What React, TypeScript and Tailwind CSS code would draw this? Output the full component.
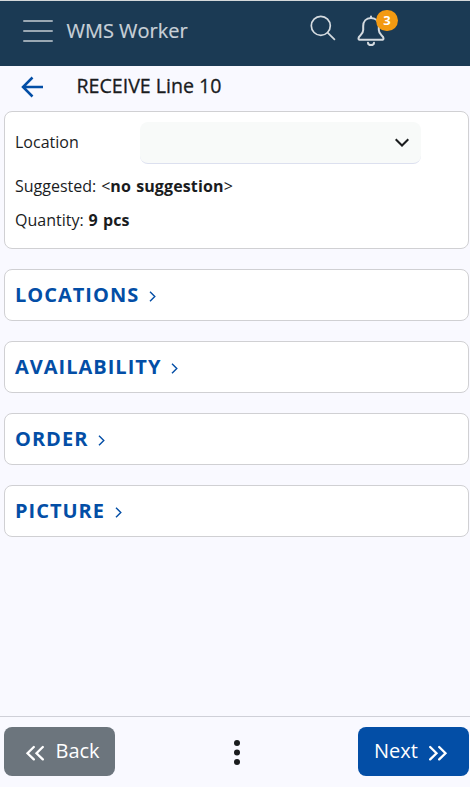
import React from "react";

function Section({ title }: { title: string }) {
  return (
    <section className="flex h-[52px] items-center rounded-lg border border-[#d0d0d3] bg-white px-2.5">
      <h2 className="text-[20px] leading-[26px] font-bold tracking-[1px] text-[#034ea6]">{title}</h2>
      <svg className="mt-[3px] ml-[9.500px] h-[11px] w-[7px]" viewBox="0 0 7 11" fill="none" stroke="#034ea6" strokeWidth="1.4">
        <path d="M1 .7 5.8 5.5 1 10.3" />
      </svg>
    </section>
  );
}

export default function App() {
  return (
    <div className="flex h-[787px] w-[470px] flex-col overflow-hidden bg-[#f9f9ff] font-['Open_Sans',sans-serif] text-[#1a1c1e]">
      <header className="flex h-[66px] shrink-0 border-t border-[#d5d8da] bg-[#1b3a54] pl-[23px] text-[#c9d1d8]">
        <svg className="mt-[18px] h-6 w-[30px]" viewBox="0 0 30 24" fill="none" stroke="#9aa8b3" strokeWidth="2" strokeLinecap="round">
          <path d="M1 2h28M1 12h28M1 22h28" />
        </svg>
        <div className="mt-[16px] ml-[13.500px] w-[243.500px] text-[20px] leading-[28px] font-medium whitespace-nowrap [-webkit-text-stroke:0.2px]">WMS Worker</div>
        <svg className="mt-[14px] h-[26px] w-[26px]" viewBox="0 0 26 26" fill="none" stroke="#d5dbe0" strokeWidth="1.7">
          <circle cx="10.8" cy="10.8" r="9.5" />
          <path d="m17.6 17.6 7.3 7.3" />
        </svg>
        <div className="relative mt-[14px] ml-[21px] h-8 w-7">
          <svg className="h-8 w-7" viewBox="0 0 28 32" fill="none" stroke="#d5dbe0" strokeWidth="2" strokeLinejoin="round" strokeLinecap="round">
            <path d="M14 1.500V3M14 3C9 3 6.200 6.500 6.200 11v4C6.200 20 1.500 20.500 1.500 23.200c0 1.100.7 1.600 1.700 1.600h21.600c1 0 1.700-.5 1.700-1.600 0-2.700-4.700-3.200-4.700-8.200v-4C21.800 6.500 19 3 14 3Z" />
            <path d="M11 27.800c.3 3 5.700 3 6 0" />
          </svg>
          <span className="absolute -top-[5px] left-[19px] flex h-[21px] w-[22px] items-center justify-center rounded-full bg-[#f39a12] text-[13px] leading-none font-bold text-white">3</span>
        </div>
      </header>

      <div className="flex h-[45px] shrink-0 items-center pl-[21px]">
        <svg className="-mt-[3px] h-[22px] w-[22px]" viewBox="0 0 22 22" fill="none" stroke="#034ea6" strokeWidth="2.500">
          <path d="M11.500 1.500 2 11l9.500 9.500M2 11h20" />
        </svg>
        <h1 className="-mt-[5px] ml-[33.500px] text-[19.600px] leading-6 font-medium [-webkit-text-stroke:0.3px]">RECEIVE Line 10</h1>
      </div>

      <main className="flex grow flex-col gap-5 pr-px pl-1">
        <section className="h-[138px] rounded-lg border border-[#d0d0d3] bg-white px-2.5 pt-2.5 text-[16px] leading-[22px]">
          <div className="flex h-[42px] items-center">
            <label className="-mt-0.5 w-[125px]">Location</label>
            <button aria-label="Location" className="flex h-[42px] w-[281px] items-center justify-end rounded-lg border-b border-[#dce0ef] bg-[#f8faf9] pr-3">
              <svg className="h-[9px] w-3.5" viewBox="0 0 14 9" fill="none" stroke="#1a1c1e" strokeWidth="2">
                <path d="m.700 1.200 6.300 6.300 6.300-6.300" />
              </svg>
            </button>
          </div>
          <p className="mt-[11px] [word-spacing:0.8px]">Suggested: &lt;<b className="tracking-[0.13px]">no suggestion</b>&gt;</p>
          <p className="mt-3 [word-spacing:0.8px]">Quantity: <b className="tracking-[0.13px]">9 pcs</b></p>
        </section>
        <Section title="LOCATIONS" />
        <Section title="AVAILABILITY" />
        <Section title="ORDER" />
        <Section title="PICTURE" />
      </main>

      <footer className="flex h-[71px] shrink-0 items-start justify-between border-t border-[#cfd0d8] pt-2.5 pr-px pl-1">
        <button className="flex h-[49px] w-[111px] items-center rounded-lg bg-[#6c757d] pl-[21px] text-[20px] text-white">
          <svg className="mt-[3px] h-4 w-5" viewBox="0 0 20 16" fill="none" stroke="white" strokeWidth="2.300" strokeLinecap="round">
            <path d="M8.800 2 2.500 8.200l6.300 6.200M17.800 2l-6.300 6.200 6.300 6.200" />
          </svg>
          <span className="-mt-px ml-[10.500px]">Back</span>
        </button>
        <svg className="mt-[13px] h-[26px] w-1.5" viewBox="0 0 6 26" fill="#1a1c1e">
          <circle cx="3" cy="3" r="3" /><circle cx="3" cy="12.500" r="3" /><circle cx="3" cy="22" r="3" />
        </svg>
        <button className="flex h-[49px] w-[111px] items-center rounded-lg bg-[#034ea6] pl-4 text-[20px] text-white">
          <span className="-mt-px">Next</span>
          <svg className="mt-[3px] ml-2.5 h-4 w-5" viewBox="0 0 20 16" fill="none" stroke="white" strokeWidth="2.300" strokeLinecap="round">
            <path d="m2.200 2 6.300 6.200-6.300 6.200M11.200 2l6.300 6.200-6.300 6.200" />
          </svg>
        </button>
      </footer>
    </div>
  );
}
